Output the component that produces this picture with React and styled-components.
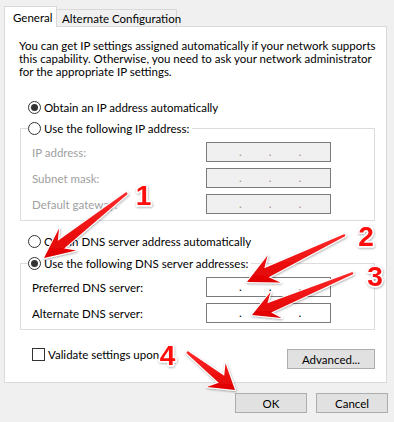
import React from 'react'
import styled, { createGlobalStyle } from 'styled-components'

const GlobalStyle = createGlobalStyle`
  html, body {
    margin: 0;
    padding: 0;
    background: #f0f0f0;
  }
  body {
    font-family: Lato, 'Liberation Sans', Arial, sans-serif;
    font-size: 11.5px;
    color: #000;
  }
`

const Window = styled.div`
  position: relative;
  width: 394px;
  height: 422px;
  background: #f0f0f0;
  overflow: hidden;
`

const TabStrip = styled.div`
  display: flex;
  align-items: flex-end;
  height: 26px;
  padding-left: 4px;
  position: relative;
  z-index: 1;
`

const Tab = styled.div`
  box-sizing: border-box;
  display: flex;
  align-items: center;
  width: ${({ $width }) => $width}px;
  height: ${({ $active }) => ($active ? '21px' : '17px')};
  margin-bottom: ${({ $active }) => ($active ? '-1px' : '0')};
  padding-left: ${({ $active }) => ($active ? '8px' : '5px')};
  background: ${({ $active }) => ($active ? '#fff' : '#f0f0f0')};
  border: 1px solid #d9d9d9;
  border-bottom: none;
  ${({ $active }) => !$active && 'border-left: none;'}
  white-space: nowrap;
`

const Panel = styled.div`
  box-sizing: border-box;
  display: flex;
  flex-direction: column;
  width: 383px;
  height: 357px;
  margin-left: 4px;
  padding: 12px 11px 0 15px;
  background: #fff;
  border: 1px solid #d9d9d9;
`

const Intro = styled.div`
  margin-left: -1px;
`

const IntroLine = styled.span`
  display: block;
  height: 13px;
  line-height: 13px;
  white-space: nowrap;
`

const RadioRow = styled.label`
  display: flex;
  align-items: center;
  gap: 3px;
  height: 16px;
  margin: ${({ $top }) => $top}px 0 0 8px;
  white-space: nowrap;
`

const RadioMark = styled.span`
  position: relative;
  box-sizing: border-box;
  flex: none;
  width: 13px;
  height: 13px;
  border: 1px solid #333;
  border-radius: 50%;
  background: #fff;

  &::after {
    content: '';
    position: absolute;
    inset: 2px;
    border-radius: 50%;
    background: #333;
    display: ${({ $checked }) => ($checked ? 'block' : 'none')};
  }
`

const GroupBox = styled.fieldset`
  margin: ${({ $top }) => $top}px 0 0 0;
  padding: 0 0 6px 7px;
  border: 1px solid #dcdcdc;
  min-width: 0;
`

const Legend = styled.legend`
  padding: 0 3px 0 0;
  height: 16px;
`

const LegendLabel = styled.span`
  display: inline-flex;
  align-items: center;
  gap: 3px;
  height: 16px;
  white-space: nowrap;
`

const FieldGrid = styled.div`
  display: grid;
  grid-template-columns: 174px 125px;
  grid-auto-rows: 20px;
  row-gap: 6px;
  align-items: center;
  margin: 6px 0 0 4px;
`

const FieldLabel = styled.span`
  color: ${({ $disabled }) => ($disabled ? '#a0a0a0' : '#000')};
  white-space: nowrap;
`

const IpBox = styled.div`
  box-sizing: border-box;
  display: flex;
  align-items: flex-end;
  gap: 27px;
  height: 20px;
  padding: 0 0 3px 32px;
  border: 1px solid #7a7a7a;
  background: ${({ $disabled }) => ($disabled ? '#f0f0f0' : '#fff')};
  color: ${({ $disabled }) => ($disabled ? '#b08a8a' : '#000')};
  line-height: 12px;
`

const BottomRow = styled.div`
  display: flex;
  align-items: flex-start;
  justify-content: space-between;
  margin-top: 18px;
`

const CheckRow = styled.label`
  display: flex;
  align-items: center;
  gap: 3px;
  height: 13px;
  margin-left: 12px;
  white-space: nowrap;
`

const CheckMark = styled.span`
  box-sizing: border-box;
  flex: none;
  width: 13px;
  height: 13px;
  border: 1px solid #333;
  background: #fff;
`

const Button = styled.button`
  box-sizing: border-box;
  width: ${({ $width }) => $width}px;
  height: 20px;
  margin-top: ${({ $top }) => $top || 0}px;
  padding: 0;
  font: inherit;
  color: #000;
  background: #e1e1e1;
  border: 1px solid #adadad;
  border-radius: 0;
`

const Footer = styled.div`
  display: flex;
  justify-content: flex-end;
  gap: 9px;
  padding: 10px 6px 0 0;
`

const Overlay = styled.svg`
  position: absolute;
  inset: 0;
  pointer-events: none;
  z-index: 2;
`

const Number = styled.text`
  font-family: 'Liberation Sans', Arial, sans-serif;
  font-weight: bold;
  font-size: 28px;
  fill: #ff0a0a;
  stroke: #fff;
  stroke-width: 3px;
  stroke-linejoin: round;
  paint-order: stroke;
`

// skitch-style arrow: thin tail, widening shaft, swept-back head
function arrowPath([x1, y1], [x2, y2], head, half, shaft) {
  const dx = x2 - x1
  const dy = y2 - y1
  const len = Math.hypot(dx, dy)
  const ux = dx / len
  const uy = dy / len
  const pt = (a, b) => `${(x1 + ux * a - uy * b).toFixed(1)},${(y1 + uy * a + ux * b).toFixed(1)}`
  const neck = len - head * 0.72
  return [
    `M${pt(0, 1.2)}`,
    `L${pt(neck, shaft)}`,
    `L${pt(len - head, half)}`,
    `L${pt(len, 0)}`,
    `L${pt(len - head, -half)}`,
    `L${pt(neck, -shaft)}`,
    `L${pt(0, -1.2)}`,
    'Z',
  ].join(' ')
}

const arrows = [
  { from: [127, 193], to: [44, 258], head: 30, half: 14, shaft: 5 },
  { from: [345, 235], to: [247, 282], head: 30, half: 15, shaft: 5 },
  { from: [353, 273], to: [252, 315], head: 26, half: 14, shaft: 5 },
  { from: [187, 352], to: [235, 390], head: 24, half: 15, shaft: 4.5 },
]

const labels = [
  { n: '1', x: 143.5, y: 205 },
  { n: '2', x: 366, y: 246 },
  { n: '3', x: 375, y: 286 },
  { n: '4', x: 167.5, y: 365 },
]

const Annotations = () => (
  <Overlay width="394" height="422" viewBox="0 0 394 422">
    <defs>
      <filter id="shadow" x="-20%" y="-20%" width="140%" height="140%">
        <feDropShadow dx="0.5" dy="1" stdDeviation="0.8" floodColor="#000" floodOpacity="0.35" />
      </filter>
      <linearGradient id="red" x1="0" y1="0" x2="0" y2="1">
        <stop offset="0" stopColor="#ff2a2a" />
        <stop offset="1" stopColor="#e00000" />
      </linearGradient>
    </defs>
    {arrows.map((a, i) => (
      <path
        key={i}
        d={arrowPath(a.from, a.to, a.head, a.half, a.shaft)}
        fill="url(#red)"
        stroke="#fff"
        strokeWidth="2"
        strokeLinejoin="round"
        paintOrder="stroke"
        filter="url(#shadow)"
      />
    ))}
    {labels.map((l) => (
      <Number key={l.n} x={l.x} y={l.y} textAnchor="middle" filter="url(#shadow)">
        {l.n}
      </Number>
    ))}
  </Overlay>
)

const IpField = ({ disabled }) => (
  <IpBox $disabled={disabled}>
    <span>.</span>
    <span>.</span>
    <span>.</span>
  </IpBox>
)

const Radio = ({ checked }) => <RadioMark $checked={checked} />

export default function App() {
  return (
    <Window>
      <GlobalStyle />
      <TabStrip>
        <Tab $active $width={53}>General</Tab>
        <Tab $width={120}>Alternate Configuration</Tab>
      </TabStrip>
      <Panel>
        <Intro>
          <IntroLine>You can get IP settings assigned automatically if your network supports</IntroLine>
          <IntroLine>this capability. Otherwise, you need to ask your network administrator</IntroLine>
          <IntroLine>for the appropriate IP settings.</IntroLine>
        </Intro>

        <RadioRow $top={21}>
          <Radio checked />
          Obtain an IP address automatically
        </RadioRow>

        <GroupBox $top={5}>
          <Legend>
            <LegendLabel>
              <Radio />
              Use the following IP address:
            </LegendLabel>
          </Legend>
          <FieldGrid>
            <FieldLabel $disabled>IP address:</FieldLabel>
            <IpField disabled />
            <FieldLabel $disabled>Subnet mask:</FieldLabel>
            <IpField disabled />
            <FieldLabel $disabled>Default gateway:</FieldLabel>
            <IpField disabled />
          </FieldGrid>
        </GroupBox>

        <RadioRow $top={12}>
          <Radio />
          Obtain DNS server address automatically
        </RadioRow>

        <GroupBox $top={6}>
          <Legend>
            <LegendLabel>
              <Radio checked />
              Use the following DNS server addresses:
            </LegendLabel>
          </Legend>
          <FieldGrid>
            <FieldLabel>Preferred DNS server:</FieldLabel>
            <IpField />
            <FieldLabel>Alternate DNS server:</FieldLabel>
            <IpField />
          </FieldGrid>
        </GroupBox>

        <BottomRow>
          <CheckRow>
            <CheckMark />
            Validate settings upon
          </CheckRow>
          <Button $width={88} $top={1}>Advanced...</Button>
        </BottomRow>
      </Panel>
      <Footer>
        <Button $width={72}>OK</Button>
        <Button $width={72}>Cancel</Button>
      </Footer>
      <Annotations />
    </Window>
  )
}
